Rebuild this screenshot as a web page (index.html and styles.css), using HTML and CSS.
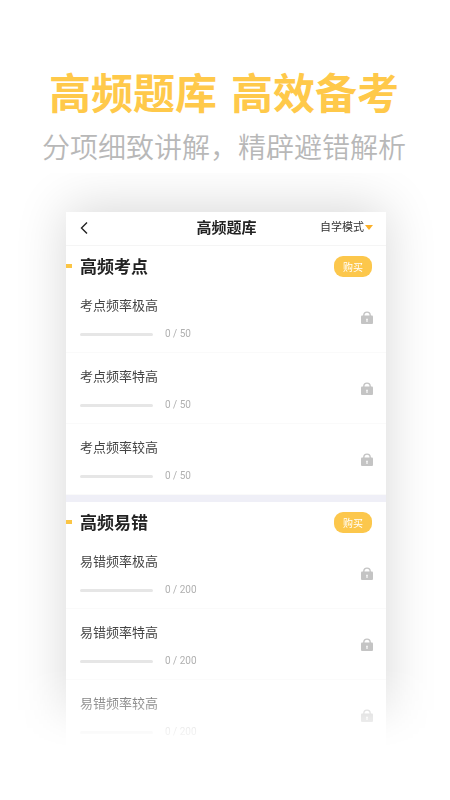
FILE: index.html
```
<!DOCTYPE html>
<html lang="zh-CN">
<head>
    <meta charset="UTF-8">
    <meta name="viewport" content="width=device-width, initial-scale=1.0">
    <title>高频题库</title>
    <link rel="stylesheet" href="styles.css">
</head>
<body>
    <svg class="sprite" aria-hidden="true">
        <symbol id="lock" viewBox="0 0 12 13">
            <path d="M2.800 6V4.400a3.200 3.300 0 0 1 6.400 0V6" fill="none" stroke="#c4c4c4" stroke-width="1.400"/>
            <rect x="0" y="4.600" width="12" height="8.400" rx="1" fill="#c4c4c4"/>
            <path d="M6 7.600a.9.9 0 0 1 .5 1.600l.3 1.600H5.200l.3-1.600A.9.9 0 0 1 6 7.600z" fill="#fff"/>
        </symbol>
    </svg>
    <header class="hero">
        <h1><span>高频题库</span><span>高效备考</span></h1>
        <p>分项细致讲解，精辟避错解析</p>
    </header>
    <main class="preview">
        <div class="card">
            <nav class="topbar">
                <button type="button" class="back" aria-label="返回">
                    <svg width="8" height="12" viewBox="0 0 8 12"><path d="M7 0.500L1.500 6 7 11.500" fill="none" stroke="#222" stroke-width="1.400"/></svg>
                </button>
                <h2>高频题库</h2>
                <div class="mode">
                    <select aria-label="模式">
                        <option>自学模式</option>
                    </select>
                    <span class="arrow"></span>
                </div>
            </nav>

            <section class="group">
                <div class="group-head">
                    <h3>高频考点</h3>
                    <button type="button" class="buy">购买</button>
                </div>
                <ul>
                    <li class="item">
                        <div class="info">
                            <label for="p1">考点频率极高</label>
                            <div class="meta"><progress id="p1" value="0" max="50"></progress><span>0 / 50</span></div>
                        </div>
                        <svg class="lock"><use href="#lock"/></svg>
                    </li>
                    <li class="item">
                        <div class="info">
                            <label for="p2">考点频率特高</label>
                            <div class="meta"><progress id="p2" value="0" max="50"></progress><span>0 / 50</span></div>
                        </div>
                        <svg class="lock"><use href="#lock"/></svg>
                    </li>
                    <li class="item">
                        <div class="info">
                            <label for="p3">考点频率较高</label>
                            <div class="meta"><progress id="p3" value="0" max="50"></progress><span>0 / 50</span></div>
                        </div>
                        <svg class="lock"><use href="#lock"/></svg>
                    </li>
                </ul>
            </section>

            <section class="group">
                <div class="group-head">
                    <h3>高频易错</h3>
                    <button type="button" class="buy">购买</button>
                </div>
                <ul>
                    <li class="item">
                        <div class="info">
                            <label for="p4">易错频率极高</label>
                            <div class="meta"><progress id="p4" value="0" max="200"></progress><span>0 / 200</span></div>
                        </div>
                        <svg class="lock"><use href="#lock"/></svg>
                    </li>
                    <li class="item">
                        <div class="info">
                            <label for="p5">易错频率特高</label>
                            <div class="meta"><progress id="p5" value="0" max="200"></progress><span>0 / 200</span></div>
                        </div>
                        <svg class="lock"><use href="#lock"/></svg>
                    </li>
                    <li class="item">
                        <div class="info">
                            <label for="p6">易错频率较高</label>
                            <div class="meta"><progress id="p6" value="0" max="200"></progress><span>0 / 200</span></div>
                        </div>
                        <svg class="lock"><use href="#lock"/></svg>
                    </li>
                </ul>
            </section>
        </div>
    </main>
</body>
</html>
```
FILE: styles.css
```
* {
    box-sizing: border-box;
}
body {
    margin: 0;
    background-color: #fff;
    color: #222;
    font-family: Roboto, "Noto Sans CJK SC", sans-serif;
}
h1, h2, h3, p, ul {
    margin: 0;
    padding: 0;
}
button, select {
    padding: 0;
    border: none;
    background: none;
    color: inherit;
    font-family: inherit;
    cursor: pointer;
}
.sprite {
    display: none;
}

.hero {
    padding: 65px 2px 0 0;
    text-align: center;
}
.hero h1 {
    display: flex;
    justify-content: center;
    gap: 14px;
    color: #ffc94a;
    font-size: 42px;
    line-height: 60px;
}
.hero p {
    color: #b8b8b8;
    font-size: 28px;
    font-weight: 350;
    line-height: 48px;
}

/* Fades the card and its shadow out at the bottom */
.preview {
    padding: 39px 64px 48px 66px;
    -webkit-mask-image: linear-gradient(#000 calc(100% - 130px), rgba(0, 0, 0, 0.6) calc(100% - 96px), rgba(0, 0, 0, 0.2) calc(100% - 68px), transparent calc(100% - 50px));
    mask-image: linear-gradient(#000 calc(100% - 130px), rgba(0, 0, 0, 0.6) calc(100% - 96px), rgba(0, 0, 0, 0.2) calc(100% - 68px), transparent calc(100% - 50px));
}
.card {
    background-color: #fff;
    box-shadow: 0 -4px 48px rgba(0, 0, 0, 0.16);
}
.topbar {
    display: grid;
    grid-template-columns: 1fr auto 1fr;
    align-items: center;
    height: 34px;
    padding: 0 13px 2px 14px;
    border-bottom: 1px solid #f5f5f5;
}
.topbar h2 {
    font-size: 15px;
    line-height: 24px;
}
.back {
    display: flex;
    justify-self: start;
}
.mode {
    display: flex;
    align-items: center;
    justify-self: end;
    gap: 1px;
}
.mode select {
    appearance: none;
    color: #333;
    font-size: 11px;
}
.arrow {
    border: 4px solid transparent;
    border-top: 5px solid #fbb028;
    border-bottom: none;
}

.group + .group {
    border-top: 7px solid #efeff7;
}
.group-head {
    display: flex;
    align-items: center;
    gap: 8px;
    height: 36px;
    padding: 4px 14px 0 0;
}
.group-head::before {
    content: "";
    width: 6px;
    height: 4px;
    background-color: #fbc545;
}
.group-head h3 {
    flex: 1;
    padding-top: 2px;
    font-size: 17px;
    line-height: 24px;
}
.buy {
    width: 38px;
    height: 21px;
    border-radius: 9px;
    background-color: #fcc74c;
    color: #fff;
    font-size: 10px;
}
.item {
    display: flex;
    align-items: center;
    justify-content: space-between;
    height: 71px;
    padding: 0 13px 0 14px;
    border-bottom: 1px solid #fafafa;
}
.info {
    padding-top: 4px;
}
.item label {
    display: block;
    color: #444;
    font-size: 13px;
    line-height: 20px;
}
.meta {
    display: flex;
    align-items: center;
    gap: 12px;
    margin-top: 10px;
    color: #b0b0b0;
    font-size: 10px;
    line-height: 16px;
}
progress {
    appearance: none;
    width: 73px;
    height: 3px;
    border: none;
    border-radius: 2px;
    overflow: hidden;
}
progress::-webkit-progress-bar {
    background-color: #e6e6e6;
}
progress::-webkit-progress-value {
    background-color: #fcc74c;
}
.lock {
    width: 12px;
    height: 13px;
}
```
